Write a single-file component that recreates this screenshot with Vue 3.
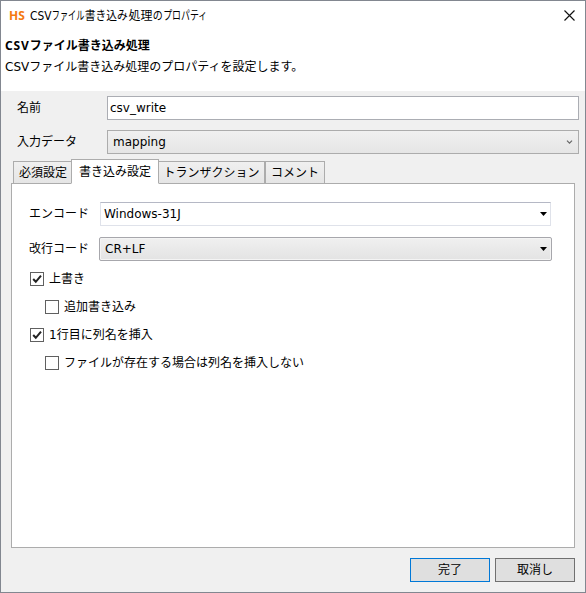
<script setup>
import { ref } from 'vue'

const titleRuns = [
  { text: 'CSV', x: 0, w: 21.5 },
  { text: 'ファイル', x: 21.8, w: 32.5 },
  { text: '書き込み', x: 54.8, w: 43 },
  { text: '処理', x: 98.5, w: 24 },
  { text: 'の', x: 122.8, w: 10 },
  { text: 'プロパティ', x: 133.2, w: 44 },
]
const tabs = ['必須設定', '書き込み設定', 'トランザクション', 'コメント']
const active = ref(1)
const options = ref([
  { label: '上書き', checked: true, sub: false },
  { label: '追加書き込み', checked: false, sub: true },
  { label: '1行目に列名を挿入', checked: true, sub: false },
  { label: 'ファイルが存在する場合は列名を挿入しない', checked: false, sub: true },
])
</script>

<template>
  <div class="dialog">
    <header class="head">
      <div class="titlebar">
        <span class="logo">HS</span>
        <svg class="title" width="200" height="20">
          <text v-for="r in titleRuns" :key="r.x" :x="r.x" y="14" :textLength="r.w" lengthAdjust="spacingAndGlyphs">{{ r.text }}</text>
        </svg>
        <svg class="close" width="11" height="11" viewBox="0 0 11 11">
          <path d="M.5.5l10 10M10.5.5l-10 10" stroke="#111" stroke-width="1.15" fill="none" />
        </svg>
      </div>
      <h1><span class="latin">CSV</span>ファイル書き込み処理</h1>
      <p>CSVファイル書き込み処理のプロパティを設定します。</p>
    </header>

    <div class="field">
      <label>名前</label>
      <div class="box input">csv_write</div>
    </div>
    <div class="field second">
      <label>入力データ</label>
      <div class="box combo">
        mapping
        <svg width="7" height="5" viewBox="0 0 7 5"><path d="M1 .7l2.5 2.5L6 .7" stroke="#666" stroke-width="1.2" fill="none" /></svg>
      </div>
    </div>

    <nav class="tabs">
      <button v-for="(t, i) in tabs" :key="t" class="tab" :class="['tab' + i, { active: i === active }]" @click="active = i">{{ t }}</button>
    </nav>
    <section class="panel">
      <div class="row">
        <label>エンコード</label>
        <div class="select plain">Windows-31J<svg width="7" height="4"><path d="M0 0h7L3.5 4z" /></svg></div>
      </div>
      <div class="row code">
        <label>改行コード</label>
        <div class="select raised">CR+LF<svg width="7" height="4"><path d="M0 0h7L3.5 4z" /></svg></div>
      </div>
      <div class="checks">
        <div v-for="o in options" :key="o.label" class="check" :class="{ sub: o.sub }" @click="o.checked = !o.checked">
          <span class="mark">
            <svg v-if="o.checked" width="12" height="12" viewBox="0 0 12 12"><path d="M2.2 6l2.6 2.8L10 2.6" stroke="#222" stroke-width="2" fill="none" /></svg>
          </span>
          <span>{{ o.label }}</span>
        </div>
      </div>
    </section>

    <footer class="actions">
      <button class="btn primary">完了</button>
      <button class="btn">取消し</button>
    </footer>
  </div>
</template>

<style>
body { margin: 0; overflow: hidden; }
</style>

<style scoped>
* { box-sizing: border-box; }
.dialog {
  width: 586px; height: 593px; display: flex; flex-direction: column;
  border: 1px solid #828790; background: #f0f0f0; color: #000;
  font: 12px/16px "DejaVu Sans", "Noto Sans CJK JP", sans-serif;
  white-space: nowrap;
}
button { font: inherit; color: inherit; padding: 0; margin: 0; border-radius: 0; }
.head { height: 90px; background: #fff; flex: none; }
.titlebar { height: 29px; display: flex; align-items: center; padding: 0 10px 0 8px; }
.logo { width: 21px; color: #f47a10; font: bold 12px/16px "Open Sans", sans-serif; }
.title { font-size: 12px; }
.close { margin-left: auto; }
h1 { margin: 8px 0 0 4px; font-size: 12px; line-height: 16px; font-family: "Noto Sans", "Noto Sans CJK JP", sans-serif; }
.latin { letter-spacing: 0.9px; }
p { margin: 5px 0 0 4px; }
.field { display: flex; align-items: center; height: 24px; margin: 5px 6px 0 16px; flex: none; }
.field.second { margin-top: 10px; }
.field label { width: 90px; }
.box { flex: 1; height: 24px; border: 1px solid #abadb3; background: #fff; line-height: 22px; padding-left: 2px; }
.combo {
  display: flex; align-items: center; justify-content: space-between; padding: 0 5px;
  border-color: #acacac; background: linear-gradient(#f0f0f0, #e5e5e5);
}
.tabs { display: flex; align-items: flex-end; height: 25px; margin: 5px 0 -1px 12px; flex: none; z-index: 1; }
.tab {
  height: 23px; border: 1px solid #acacac; border-left-width: 0;
  background: linear-gradient(#f0f0f0, #e5e5e5); text-align: center; line-height: 20px;
}
.tab0 { width: 58px; border-left-width: 1px; border-right: 0; padding-left: 1px; }
.tab1 { width: 88px; }
.tab2 { width: 106px; }
.tab3 { width: 60px; border-left-width: 1px; }
.tab.active { height: 25px; border-left-width: 1px; background: #fff; border-bottom-color: #fff; line-height: 22px; }
.panel { height: 365px; margin: 0 10px; border: 1px solid #acacac; background: #fff; padding: 18px 22px 0 17px; flex: none; }
.row { display: flex; align-items: center; height: 24px; }
.row label { width: 71px; }
.select { flex: 1; height: 24px; display: flex; align-items: center; justify-content: space-between; padding: 0 3px; border: 1px solid #dfe2ea; }
.plain { border-top-color: #b5b8c5; margin-right: 1px; }
.row.code { margin-top: 11px; }
.code label { width: 70px; }
.raised { border-color: #a7a7ac; border-radius: 2px; padding: 0 4px 0 5px; background: linear-gradient(#f0f0f0, #e3e3e3); box-shadow: inset 0 0 0 1px #f4f4f4; }
.checks { display: grid; gap: 12px; margin-top: 10px; padding-left: 1px; }
.check { display: flex; align-items: center; gap: 5px; height: 16px; }
.check.sub { padding-left: 15px; }
.mark { width: 14px; height: 14px; border: 1px solid #606060; display: flex; }
.actions { display: flex; justify-content: flex-end; gap: 5px; padding: 10px 10px 0 0; }
.btn { width: 80px; height: 24px; border: 1px solid #707070; background: #dfdfdf; line-height: 20px; }
.btn.primary { border-color: #0078d7; }
</style>
